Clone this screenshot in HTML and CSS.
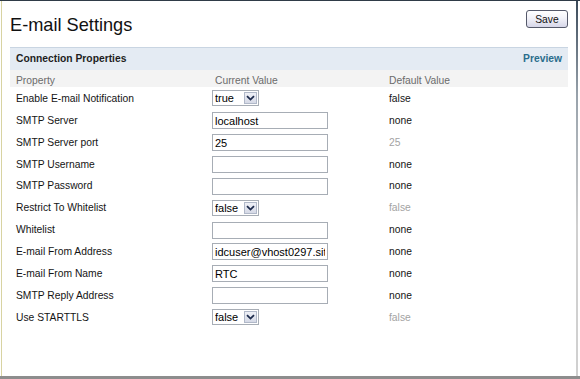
FILE: index.html
```html
<!DOCTYPE html>
<html lang="en">
<head>
  <meta charset="UTF-8" />
  <meta name="viewport" content="width=device-width, initial-scale=1.0"/>
  <title>E-mail Settings</title>
  <link rel="stylesheet" href="styles.css">
</head>
<body>
  <div class="frame">
    <div class="page">
      <div class="page-head">
        <h1>E-mail Settings</h1>
        <button class="save">Save</button>
      </div>

      <div class="panel">
        <div class="panel-title">
          <span>Connection Properties</span>
          <a class="preview">Preview</a>
        </div>

        <div class="row head">
          <div>Property</div>
          <div>Current Value</div>
          <div>Default Value</div>
        </div>

        <div class="row">
          <div>Enable E-mail Notification</div>
          <div class="cell">
            <span class="select">
              <select><option>true</option><option>false</option></select>
              <span class="arrow"><svg width="9" height="6" viewBox="0 0 9 6"><path d="M1 1.2 L4.5 4.6 L8 1.2" fill="none" stroke="#1d2b4c" stroke-width="1.8"/></svg></span>
            </span>
          </div>
          <div>false</div>
        </div>
        <div class="row">
          <div>SMTP Server</div>
          <div class="cell"><input type="text" class="text" value="localhost" /></div>
          <div>none</div>
        </div>
        <div class="row">
          <div>SMTP Server port</div>
          <div class="cell"><input type="text" class="text" value="25" /></div>
          <div class="muted">25</div>
        </div>
        <div class="row">
          <div>SMTP Username</div>
          <div class="cell"><input type="text" class="text" value="" /></div>
          <div>none</div>
        </div>
        <div class="row">
          <div>SMTP Password</div>
          <div class="cell"><input type="password" class="text" value="" /></div>
          <div>none</div>
        </div>
        <div class="row">
          <div>Restrict To Whitelist</div>
          <div class="cell">
            <span class="select">
              <select><option>false</option><option>true</option></select>
              <span class="arrow"><svg width="9" height="6" viewBox="0 0 9 6"><path d="M1 1.2 L4.5 4.6 L8 1.2" fill="none" stroke="#1d2b4c" stroke-width="1.8"/></svg></span>
            </span>
          </div>
          <div class="muted">false</div>
        </div>
        <div class="row">
          <div>Whitelist</div>
          <div class="cell"><input type="text" class="text" value="" /></div>
          <div>none</div>
        </div>
        <div class="row">
          <div>E-mail From Address</div>
          <div class="cell"><input type="text" class="text" value="idcuser@vhost0297.site1.compute.ihost.com" /></div>
          <div>none</div>
        </div>
        <div class="row">
          <div>E-mail From Name</div>
          <div class="cell"><input type="text" class="text" value="RTC" /></div>
          <div>none</div>
        </div>
        <div class="row">
          <div>SMTP Reply Address</div>
          <div class="cell"><input type="text" class="text" value="" /></div>
          <div>none</div>
        </div>
        <div class="row">
          <div>Use STARTTLS</div>
          <div class="cell">
            <span class="select">
              <select><option>false</option><option>true</option></select>
              <span class="arrow"><svg width="9" height="6" viewBox="0 0 9 6"><path d="M1 1.2 L4.5 4.6 L8 1.2" fill="none" stroke="#1d2b4c" stroke-width="1.8"/></svg></span>
            </span>
          </div>
          <div class="muted">false</div>
        </div>
      </div>
    </div>
    <div class="edge"></div>
  </div>
</body>
</html>
```

FILE: styles.css
```css
* {
  box-sizing: border-box;
}
html, body {
  margin: 0;
  background: #fff;
}
body {
  font-family: "Liberation Sans", Arial, sans-serif;
  font-size: 10.3px;
  color: #141414;
}
.frame {
  display: flex;
  height: 379px;
  border-top: 1px solid #2f3b47;
  border-bottom: 3px solid #8d8d8d;
  padding: 0 2px 0 1px;
}
.page {
  flex: 1;
  border-left: 1px solid #d8d3a2;
  padding: 9px 8px 0 8px;
}
.edge {
  width: 2px;
  background: linear-gradient(#3b4a5a, #98a2ab 25%, #d0d0d0 60%);
}
.page-head {
  display: flex;
  justify-content: space-between;
  align-items: flex-start;
}
h1 {
  margin: 0;
  padding-top: 4px;
  font-weight: normal;
  font-size: 18.2px;
  line-height: 22px;
  color: #111;
}
.save {
  width: 42px;
  height: 18px;
  padding: 0;
  font-family: "Liberation Sans", Arial, sans-serif;
  font-size: 10.3px;
  color: #111;
  border: 1px solid #55596a;
  border-radius: 3px;
  background: linear-gradient(#ffffff, #f2f2f8 45%, #d6d6e8);
  cursor: pointer;
}
.panel {
  margin-top: 11px;
}
.panel-title {
  display: flex;
  justify-content: space-between;
  height: 23px;
  line-height: 22px;
  padding: 0 6px;
  border-top: 1px solid #c9d5e2;
  background: #e4ebf3;
  font-weight: bold;
  color: #1e1e1e;
}
.preview {
  color: #2b6d8c;
  cursor: pointer;
}
.row {
  display: grid;
  grid-template-columns: 202px 177px 1fr;
  height: 21.87px;
  padding-top: 1px;
  align-items: center;
}
.row > :first-child {
  padding-left: 6px;
}
.row.head {
  height: 17px;
  padding-top: 3px;
  background: #f3f3f3;
  color: #6b6b6b;
}
.row.head > :nth-child(2) {
  padding-left: 3px;
}
.cell {
  display: flex;
  align-items: center;
}
.muted {
  color: #a3a3a3;
}
input.text {
  width: 116px;
  height: 17px;
  margin-top: 1px;
  padding: 0 2px;
  border: 1px solid #a7adb5;
  font-family: "Liberation Sans", Arial, sans-serif;
  font-size: 11px;
  color: #000;
  background: #fff;
  outline: none;
}
.select {
  display: flex;
  align-items: center;
  width: 47px;
  height: 16px;
  border: 1px solid #a7adb5;
  background: #fff;
}
.select select {
  appearance: none;
  -webkit-appearance: none;
  flex: 1;
  min-width: 0;
  height: 14px;
  padding: 0 0 0 2px;
  border: 0;
  background: transparent;
  font-family: "Liberation Sans", Arial, sans-serif;
  font-size: 11px;
  color: #000;
  outline: none;
}
.arrow {
  display: flex;
  align-items: center;
  justify-content: center;
  width: 13px;
  height: 12px;
  margin-right: 1px;
  border: 1px solid #b0b8c8;
  background: linear-gradient(#eef0f6, #d5d9e6);
}
```
